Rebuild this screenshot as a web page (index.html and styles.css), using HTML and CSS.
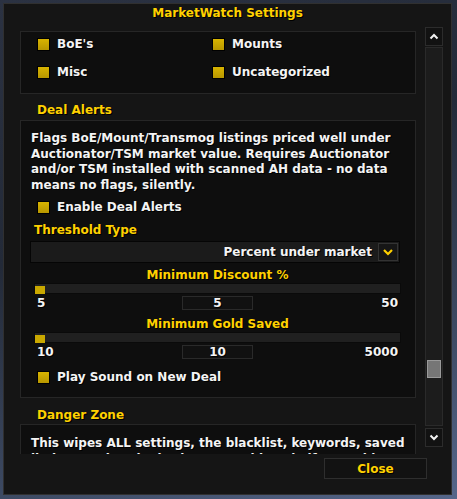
FILE: index.html
```html
<!DOCTYPE html>
<html lang="en">
<head>
    <meta charset="UTF-8">
    <meta name="viewport" content="width=device-width, initial-scale=1.0">
    <title>MarketWatch Settings</title>
    <link rel="stylesheet" href="styles.css">
</head>
<body>
    <div class="frame">
        <div class="title">MarketWatch Settings</div>

        <div class="frame-body">
            <!-- Scrolled settings list -->
            <div class="viewport">
                <div class="scroll">
                    <div class="box box-cats">
                        <label class="check"><span class="tick"></span>BoE's</label>
                        <label class="check"><span class="tick"></span>Mounts</label>
                        <label class="check"><span class="tick"></span>Misc</label>
                        <label class="check"><span class="tick"></span>Uncategorized</label>
                    </div>

                    <div class="section-title">Deal Alerts</div>
                    <div class="box box-deal">
                        <p class="desc">Flags BoE/Mount/Transmog listings priced well under Auctionator/TSM market value. Requires Auctionator and/or TSM installed with scanned AH data - no data means no flags, silently.</p>
                        <label class="check check-indent"><span class="tick"></span>Enable Deal Alerts</label>

                        <div class="field-label">Threshold Type</div>
                        <div class="dropdown">
                            <span class="dropdown-text">Percent under market</span>
                            <span class="dropdown-btn">
                                <svg width="12" height="8" viewBox="0 0 12 8"><path d="M2 2 L6 6 L10 2" fill="none" stroke="#ffd100" stroke-width="2.2"/></svg>
                            </span>
                        </div>

                        <div class="slider">
                            <div class="slider-label">Minimum Discount %</div>
                            <div class="track"><span class="knob"></span></div>
                            <div class="slider-values">
                                <span class="lo">5</span>
                                <span class="value-box">5</span>
                                <span class="hi">50</span>
                            </div>
                        </div>

                        <div class="slider slider-second">
                            <div class="slider-label">Minimum Gold Saved</div>
                            <div class="track"><span class="knob"></span></div>
                            <div class="slider-values">
                                <span class="lo">10</span>
                                <span class="value-box">10</span>
                                <span class="hi">5000</span>
                            </div>
                        </div>

                        <label class="check check-indent check-sound"><span class="tick"></span>Play Sound on New Deal</label>
                    </div>

                    <div class="section-title section-danger">Danger Zone</div>
                    <div class="box box-danger">
                        <p class="desc">This wipes ALL settings, the blacklist, keywords, saved listings and cached prices. Use this only if something is broken.</p>
                    </div>
                </div>
            </div>

            <!-- Scrollbar -->
            <div class="scrollbar">
                <div class="sb-btn">
                    <svg width="10" height="7" viewBox="0 0 10 7"><path d="M1.5 5.5 L5 2 L8.5 5.5" fill="none" stroke="#f2f2f2" stroke-width="2"/></svg>
                </div>
                <div class="sb-track"><span class="sb-thumb"></span></div>
                <div class="sb-btn sb-down">
                    <svg width="10" height="7" viewBox="0 0 10 7"><path d="M1.5 1.5 L5 5 L8.5 1.5" fill="none" stroke="#f2f2f2" stroke-width="2"/></svg>
                </div>
            </div>
        </div>

        <div class="footer">
            <button class="close-btn">Close</button>
        </div>
    </div>
</body>
</html>
```

FILE: styles.css
```css
/* General Styles */
body {
    margin: 0;
    padding: 3px;
    width: 457px;
    height: 499px;
    box-sizing: border-box;
    overflow: hidden;
    font-family: "DejaVu Sans", Verdana, sans-serif;
    font-weight: bold;
    font-size: 12px;
    color: #f4f4f4;
    background: linear-gradient(160deg, #2b3242 0%, #232a38 40%, #3d4a63 75%, #55668a 100%);
}

/* Frame */
.frame {
    width: 449px;
    height: 492px;
    box-sizing: border-box;
    border: 1px solid #303030;
    background: #151515;
    display: flex;
    flex-direction: column;
}

.title {
    height: 18px;
    line-height: 18px;
    margin-bottom: 5px;
    text-align: center;
    font-size: 12px;
    color: #ffd100;
    text-shadow: 1px 1px 0 #000;
}

.frame-body {
    display: flex;
    height: 427px;
    padding-left: 16px;
}

/* Scroll area */
.viewport {
    width: 396px;
    height: 423px;
    margin-top: 4px;
    overflow: hidden;
}

.scroll {
    display: flex;
    flex-direction: column;
}

.box {
    border: 1px solid #262626;
    background: #0e0e0e;
    box-sizing: border-box;
}

.box-cats {
    display: grid;
    grid-template-columns: 175px 1fr;
    row-gap: 14px;
    padding: 5px 16px 14px;
}

.section-title {
    height: 14px;
    line-height: 14px;
    margin: 9px 0 3px 17px;
    color: #ffd100;
    text-shadow: 1px 1px 0 #000;
}

.section-danger {
    margin-top: 10px;
    margin-bottom: 2px;
}

.check {
    display: flex;
    align-items: center;
    height: 14px;
    line-height: 14px;
    text-shadow: 1px 1px 0 #000;
}

.tick {
    width: 11px;
    height: 11px;
    margin-right: 7px;
    border: 1px solid #000;
    background: linear-gradient(#d8b400, #b89700);
    flex-shrink: 0;
}

/* Deal alerts box */
.box-deal {
    display: flex;
    flex-direction: column;
    padding: 10px 9px 13px;
}

.desc {
    margin: 0 0 0 1px;
    line-height: 15.5px;
    text-shadow: 1px 1px 0 #000;
}

.check-indent {
    margin: 7px 0 0 7px;
}

.check-sound {
    margin-top: 11px;
}

.field-label {
    height: 14px;
    line-height: 14px;
    margin: 9px 0 0 4px;
    color: #ffd100;
    text-shadow: 1px 1px 0 #000;
}

.dropdown {
    display: flex;
    align-items: center;
    justify-content: flex-end;
    width: 370px;
    height: 22px;
    margin-top: 4px;
    box-sizing: border-box;
    border: 1px solid #050505;
    background: #1b1b1b;
    padding-right: 1px;
}

.dropdown-text {
    margin-right: 6px;
    text-shadow: 1px 1px 0 #000;
}

.dropdown-btn {
    display: flex;
    align-items: center;
    justify-content: center;
    width: 20px;
    height: 18px;
    box-sizing: border-box;
    border: 1px solid #333;
    background: #161616;
}

/* Sliders */
.slider {
    display: flex;
    flex-direction: column;
    width: 367px;
    margin: 5px 0 0 4px;
}

.slider-second {
    margin-top: 7px;
}

.slider-label {
    height: 14px;
    line-height: 14px;
    text-align: center;
    color: #ffd100;
    text-shadow: 1px 1px 0 #000;
}

.track {
    height: 11px;
    margin-top: 1px;
    box-sizing: border-box;
    border: 1px solid #0a0a0a;
    background: #202020;
    display: flex;
    align-items: center;
}

.knob {
    width: 10px;
    height: 8px;
    margin-top: 2px;
    background: #c9a800;
}

.slider-values {
    display: flex;
    justify-content: space-between;
    align-items: center;
    height: 14px;
    margin-top: 2px;
    text-shadow: 1px 1px 0 #000;
}

.lo {
    width: 60px;
    padding-left: 3px;
}

.hi {
    width: 60px;
    text-align: right;
    padding-right: 3px;
}

.value-box {
    width: 71px;
    height: 14px;
    line-height: 13px;
    box-sizing: border-box;
    text-align: center;
    border: 1px solid #2a2a2a;
    background: #111;
}

/* Danger zone box */
.box-danger {
    padding: 11px 9px 20px;
}

/* Scrollbar */
.scrollbar {
    display: flex;
    flex-direction: column;
    width: 18px;
    height: 421px;
    margin-left: 9px;
}

.sb-btn {
    display: flex;
    align-items: center;
    justify-content: center;
    height: 19px;
    box-sizing: border-box;
    border: 1px solid #2c2c2c;
    background: #121212;
}

.sb-down {
    margin-top: 2px;
}

.sb-track {
    display: flex;
    flex-direction: column;
    justify-content: flex-end;
    align-items: center;
    height: 379px;
    margin-top: 1px;
    padding-bottom: 47px;
    box-sizing: border-box;
    border: 1px solid #2a2a2a;
    background: #1c1c1c;
}

.sb-thumb {
    width: 14px;
    height: 18px;
    box-sizing: border-box;
    border: 1px solid #9a9a9a;
    background: #767676;
}

/* Footer */
.footer {
    display: flex;
    justify-content: flex-end;
    margin-top: 4px;
    padding-right: 24px;
}

.close-btn {
    width: 103px;
    height: 21px;
    border: 1px solid #2e2e2e;
    background: #121212;
    font-family: "DejaVu Sans", Verdana, sans-serif;
    font-weight: bold;
    font-size: 12px;
    color: #ffd100;
    text-shadow: 1px 1px 0 #000;
    padding: 0;
}
```
